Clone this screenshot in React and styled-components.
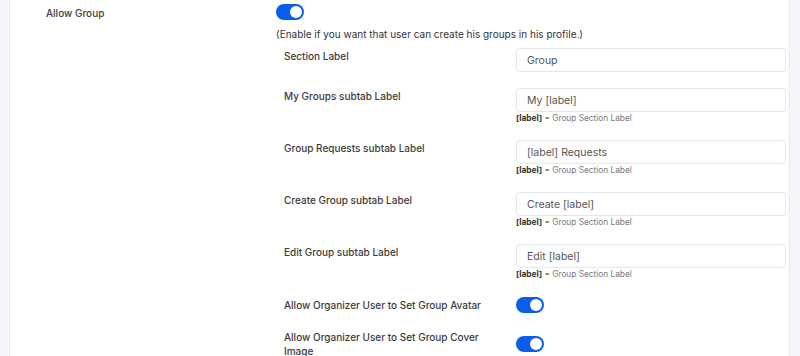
import React from "react";
import styled, { createGlobalStyle } from "styled-components";

const Global = createGlobalStyle`
  html, body { margin: 0; padding: 0; background: #f4f6f9; }
  body { font-family: "Inter", "Noto Sans", sans-serif; -webkit-font-smoothing: antialiased; }
  * { box-sizing: border-box; }
`;

const Page = styled.div`
  height: 356px;
  padding: 0 10px 0 9px;
  background: #f4f6f9;
  overflow: hidden;
`;

const Panel = styled.div`
  height: 100%;
  background: #ffffff;
  border-left: 1px solid #e6e9ee;
  border-right: 1px solid #e6e9ee;
  padding: 4px 3px 0 36px;
  display: flex;
`;

const MainLabel = styled.div`
  width: 230px;
  flex: none;
  padding-top: 2px;
  font-size: 10px;
  line-height: 14px;
  color: #3b3b3b;
  font-weight: 500;
`;

const Value = styled.div`
  flex: 1;
  display: flex;
  flex-direction: column;
  align-items: flex-start;
`;

const Track = styled.span`
  display: inline-flex;
  align-items: center;
  width: 28px;
  height: 16px;
  border-radius: 8px;
  background: #0b5ee9;
  padding: 0 2px;
  justify-content: ${(p) => (p.$on ? "flex-end" : "flex-start")};
  flex: none;
`;

const Knob = styled.span`
  width: 12px;
  height: 12px;
  border-radius: 50%;
  background: #ffffff;
`;

const Desc = styled.div`
  margin-top: 7px;
  font-size: 10px;
  line-height: 14px;
  color: #333;
`;

const SubList = styled.div`
  margin-top: 7px;
  padding-left: 8px;
  width: 100%;
  display: flex;
  flex-direction: column;
  gap: 16px;
`;

const SubRow = styled.div`
  display: flex;
  align-items: ${(p) => (p.$center ? "center" : "flex-start")};
  min-height: ${(p) => (p.$center ? "18px" : "auto")};
`;

const SubLabel = styled.div`
  width: 232px;
  flex: none;
  padding-right: 30px;
  padding-top: ${(p) => (p.$center ? "0" : "1px")};
  font-size: 10px;
  line-height: 14px;
  color: #3b3b3b;
  font-weight: 500;
`;

const Field = styled.div`
  flex: 1;
  display: flex;
  flex-direction: column;
`;

const Input = styled.input`
  width: 100%;
  height: 24px;
  border: 1px solid #e3e6eb;
  border-radius: 4px;
  background: #fff;
  padding: 0 10px;
  font-family: inherit;
  font-size: 10.5px;
  color: #555;
  outline: none;
`;

const Hint = styled.div`
  margin-top: 1px;
  font-size: 8.3px;
  line-height: 11px;
  color: #7a7a7a;
  b { color: #333; font-weight: 700; }
`;

const Toggle = ({ on = true }) => (
  <Track $on={on}>
    <Knob />
  </Track>
);

const textRows = [
  { label: "Section Label", value: "Group" },
  { label: "My Groups subtab Label", value: "My [label]", hint: true },
  { label: "Group Requests subtab Label", value: "[label] Requests", hint: true },
  { label: "Create Group subtab Label", value: "Create [label]", hint: true },
  { label: "Edit Group subtab Label", value: "Edit [label]", hint: true },
];

const toggleRows = [
  "Allow Organizer User to Set Group Avatar",
  "Allow Organizer User to Set Group Cover Image",
];

export default function App() {
  return (
    <>
      <Global />
      <Page>
        <Panel>
          <MainLabel>Allow Group</MainLabel>
          <Value>
            <Toggle />
            <Desc>(Enable if you want that user can create his groups in his profile.)</Desc>
            <SubList>
              {textRows.map((r) => (
                <SubRow key={r.label}>
                  <SubLabel>{r.label}</SubLabel>
                  <Field>
                    <Input defaultValue={r.value} />
                    {r.hint && (
                      <Hint>
                        <b>[label]</b> = Group Section Label
                      </Hint>
                    )}
                  </Field>
                </SubRow>
              ))}
              {toggleRows.map((l) => (
                <SubRow key={l} $center>
                  <SubLabel $center>{l}</SubLabel>
                  <Toggle />
                </SubRow>
              ))}
            </SubList>
          </Value>
        </Panel>
      </Page>
    </>
  );
}
